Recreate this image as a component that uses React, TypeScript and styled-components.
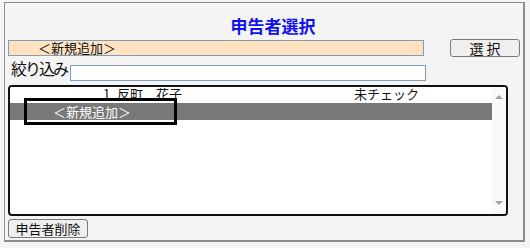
import styled, { createGlobalStyle } from "styled-components";

const GlobalStyle = createGlobalStyle`
  html, body {
    margin: 0;
    padding: 0;
    background: #f4f4f4;
    font-family: "Noto Sans CJK JP", "Noto Sans", sans-serif;
  }
  * { box-sizing: border-box; }
`;

const Panel = styled.div`
  width: 521px;
  height: 240px;
  margin: 2px 0 0 4px;
  padding: 0 0 0 3px;
  border: 1px solid #8c8c8c;
  border-right-width: 2px;
  border-bottom-width: 2px;
  background: #f4f4f4;
  display: flex;
  flex-direction: column;
`;

const Title = styled.div`
  margin-top: 13px;
  height: 23px;
  line-height: 20px;
  padding-left: 15px;
  text-align: center;
  font-size: 17px;
  font-weight: bold;
  color: #1010f0;
`;

const Row = styled.div<{ $h: number }>`
  display: flex;
  align-items: flex-start;
  height: ${(p) => p.$h}px;
`;

const Current = styled.div`
  width: 416px;
  height: 16px;
  margin-top: 1px;
  border: 1px solid #7f9db9;
  background: #ffe2c0;
  padding-left: 29px;
  font-size: 13px;
  line-height: 14px;
  color: #111;
  white-space: pre;
`;

const Btn = styled.button<{ $w: number }>`
  width: ${(p) => p.$w}px;
  height: 18px;
  padding: 0;
  border: 1px solid #7a7a7a;
  border-radius: 3px;
  background: #efefef;
  font-family: "Noto Sans CJK JP", sans-serif;
  font-size: 13px;
  line-height: 16px;
  color: #111;
  white-space: pre;
`;

const SelectBtn = styled(Btn)`
  margin-left: 26px;
  font-size: 14px;
`;

const Label = styled.div`
  margin: 1px 0 0 3px;
  font-size: 16px;
  letter-spacing: -2px;
  line-height: 20px;
  color: #111;
`;

const Search = styled.input`
  width: 356px;
  height: 16px;
  margin: 8px 0 0 3px;
  border: 1px solid #7f9db9;
  background: #fff;
  padding: 0 2px;
`;

const ListBox = styled.div`
  position: relative;
  width: 500px;
  height: 131px;
  border: 2px solid #111;
  border-radius: 4px;
  background: #fff;
  display: flex;
  overflow: hidden;
`;

const Rows = styled.div`
  width: 482px;
  display: flex;
  flex-direction: column;
`;

const ListRow = styled.div<{ $selected?: boolean }>`
  height: ${(p) => (p.$selected ? 17 : 16)}px;
  display: flex;
  align-items: flex-start;
  font-size: 13px;
  line-height: ${(p) => (p.$selected ? 17 : 13)}px;
  background: ${(p) => (p.$selected ? "#787878" : "#fff")};
  color: ${(p) => (p.$selected ? "#fff" : "#111")};
  white-space: pre;
`;

const Cell = styled.span<{ $w: number; $pad?: number }>`
  width: ${(p) => p.$w}px;
  padding-left: ${(p) => p.$pad ?? 0}px;
  flex: none;
`;

const Focus = styled.div`
  position: absolute;
  left: 14px;
  top: 11px;
  width: 153px;
  height: 27px;
  border: 3px solid #000;
`;

const ScrollBar = styled.div`
  width: 14px;
  background: #fafafa;
  display: flex;
  flex-direction: column;
  justify-content: space-between;
  align-items: center;
  padding: 8px 0 9px;
`;

const Arrow = styled.div<{ $down?: boolean }>`
  width: 0;
  height: 0;
  border-left: 4px solid transparent;
  border-right: 4px solid transparent;
  ${(p) =>
    p.$down ? "border-top: 4px solid #a0a0a0;" : "border-bottom: 4px solid #a0a0a0;"}
`;

const DeleteBtn = styled(Btn)`
  margin-top: 3px;
  height: 19px;
  font-size: 13px;
`;

export default function App() {
  return (
    <>
      <GlobalStyle />
      <Panel>
        <Title>申告者選択</Title>
        <Row $h={18}>
          <Current>＜新規追加＞</Current>
          <SelectBtn $w={70}>選 択</SelectBtn>
        </Row>
        <Row $h={28}>
          <Label>絞り込み</Label>
          <Search />
        </Row>
        <ListBox>
          <Rows>
            <ListRow>
              <Cell $w={107} $pad={93}>1</Cell>
              <Cell $w={237}>反町　花子</Cell>
              <Cell $w={100}>未チェック</Cell>
            </ListRow>
            <ListRow $selected>
              <Cell $w={200} $pad={43}>＜新規追加＞</Cell>
            </ListRow>
          </Rows>
          <ScrollBar>
            <Arrow />
            <Arrow $down />
          </ScrollBar>
          <Focus />
        </ListBox>
        <DeleteBtn $w={80}>申告者削除</DeleteBtn>
      </Panel>
    </>
  );
}
